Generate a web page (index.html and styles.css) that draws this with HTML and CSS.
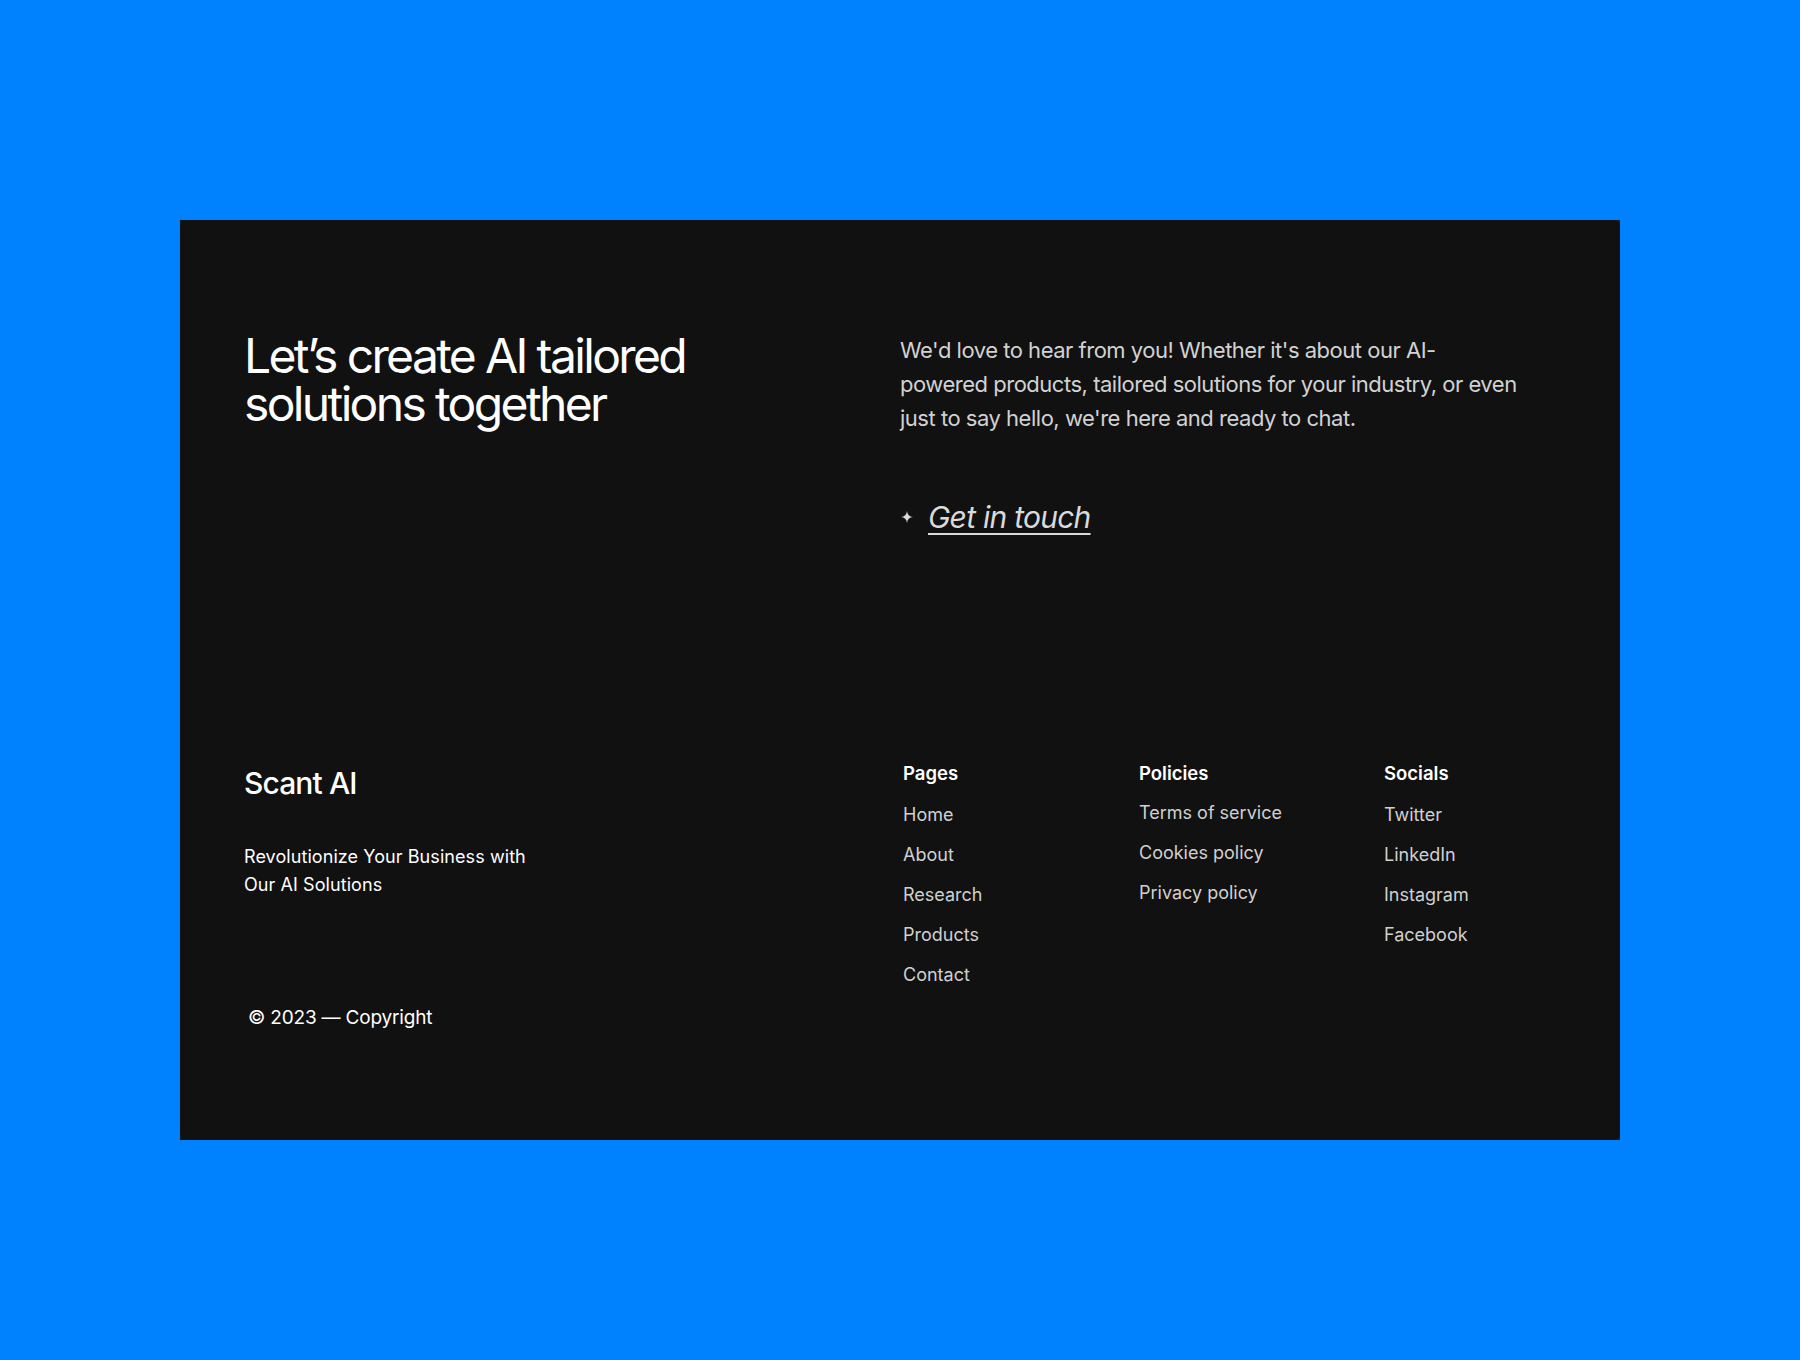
FILE: index.html
```html
<!DOCTYPE html>
<html lang="en">
<head>
<meta charset="utf-8">
<title>Scant AI — Contact</title>
<link rel="stylesheet" href="styles.css">
</head>
<body>
  <main class="stage">
    <footer class="footer">
      <section class="cta">
        <h2 class="cta-title">Let’s create AI tailored solutions together</h2>
        <div class="cta-body">
          <p class="cta-text">We'd love to hear from you! Whether it's about our AI-powered products, tailored solutions for your industry, or even just to say hello, we're here and ready to chat.</p>
          <a class="cta-link" href="#contact">
            <svg class="sparkle" viewBox="0 0 12 12" width="12" height="12" aria-hidden="true">
              <path d="M6 0 C6.4 3.6 8.4 5.6 12 6 C8.4 6.4 6.4 8.4 6 12 C5.6 8.4 3.6 6.4 0 6 C3.6 5.6 5.6 3.6 6 0 Z" fill="currentColor"/>
            </svg>
            <span class="cta-label">Get in touch</span>
          </a>
        </div>
      </section>

      <section class="bottom">
        <div class="brand">
          <div class="brand-name">Scant AI</div>
          <p class="brand-tagline">Revolutionize Your Business with Our AI Solutions</p>
          <p class="copyright">© 2023 — Copyright</p>
        </div>
        <nav class="link-groups">
          <div class="link-group">
            <h3 class="link-title">Pages</h3>
            <ul class="link-list">
              <li><a href="#">Home</a></li>
              <li><a href="#">About</a></li>
              <li><a href="#">Research</a></li>
              <li><a href="#">Products</a></li>
              <li><a href="#">Contact</a></li>
            </ul>
          </div>
          <div class="link-group">
            <h3 class="link-title">Policies</h3>
            <ul class="link-list link-list--tight">
              <li><a href="#">Terms of service</a></li>
              <li><a href="#">Cookies policy</a></li>
              <li><a href="#">Privacy policy</a></li>
            </ul>
          </div>
          <div class="link-group">
            <h3 class="link-title">Socials</h3>
            <ul class="link-list">
              <li><a href="#">Twitter</a></li>
              <li><a href="#">LinkedIn</a></li>
              <li><a href="#">Instagram</a></li>
              <li><a href="#">Facebook</a></li>
            </ul>
          </div>
        </nav>
      </section>
    </footer>
  </main>
</body>
</html>
```

FILE: styles.css
```css
* {
  box-sizing: border-box;
}

html,
body {
  margin: 0;
  padding: 0;
}

body {
  background: #0082ff;
  font-family: Inter, "Noto Sans", "Liberation Sans", sans-serif;
  color: #ffffff;
  -webkit-font-smoothing: antialiased;
}

.stage {
  min-height: 1360px;
  padding: 220px 180px;
}

.footer {
  background: #111111;
  height: 920px;
  padding: 112px 64px 108px;
  display: flex;
  flex-direction: column;
}

/* top call-to-action row */
.cta {
  display: grid;
  grid-template-columns: 1fr 1fr;
}

.cta-title {
  margin: 0;
  max-width: 460px;
  font-size: 48px;
  line-height: 48px;
  font-weight: 400;
  letter-spacing: -0.055em;
}

.cta-body {
  padding-top: 1px;
}

.cta-text {
  margin: 0;
  max-width: 620px;
  font-size: 22px;
  line-height: 34px;
  font-weight: 400;
  letter-spacing: -0.022em;
  color: #d2d2d2;
}

.cta-link {
  margin-top: 64px;
  display: inline-flex;
  align-items: center;
  gap: 15px;
  color: #dadada;
  text-decoration: none;
}

.sparkle {
  flex: none;
  margin-left: 1px;
}

.cta-label {
  font-size: 30px;
  line-height: 36px;
  font-style: italic;
  letter-spacing: -0.025em;
  text-decoration: underline;
  text-decoration-thickness: 2px;
  text-underline-offset: 5px;
}

/* bottom row: brand + link columns */
.bottom {
  margin-top: auto;
  display: grid;
  grid-template-columns: 1fr 1fr;
}

.brand {
  display: flex;
  flex-direction: column;
}

.brand-name {
  margin-top: 4px;
  font-size: 30px;
  line-height: 36px;
  font-weight: 500;
  letter-spacing: -0.03em;
}

.brand-tagline {
  margin: 42px 0 0;
  max-width: 300px;
  font-size: 18px;
  line-height: 28px;
  letter-spacing: 0.004em;
}

.copyright {
  margin: 105px 0 0 4px;
  font-size: 19px;
  line-height: 28px;
  letter-spacing: -0.01em;
}

.link-groups {
  display: grid;
  grid-template-columns: 236px 245px 1fr;
  padding-left: 3px;
}

.link-title {
  margin: 0;
  font-size: 18.5px;
  line-height: 24px;
  font-weight: 600;
}

.link-list {
  list-style: none;
  margin: 16px 0 0;
  padding: 0;
  display: flex;
  flex-direction: column;
  gap: 12px;
}

.link-list--tight {
  margin-top: 14px;
}

.link-list a {
  display: block;
  font-size: 18px;
  line-height: 28px;
  color: #d0d0d0;
  text-decoration: none;
}
```
